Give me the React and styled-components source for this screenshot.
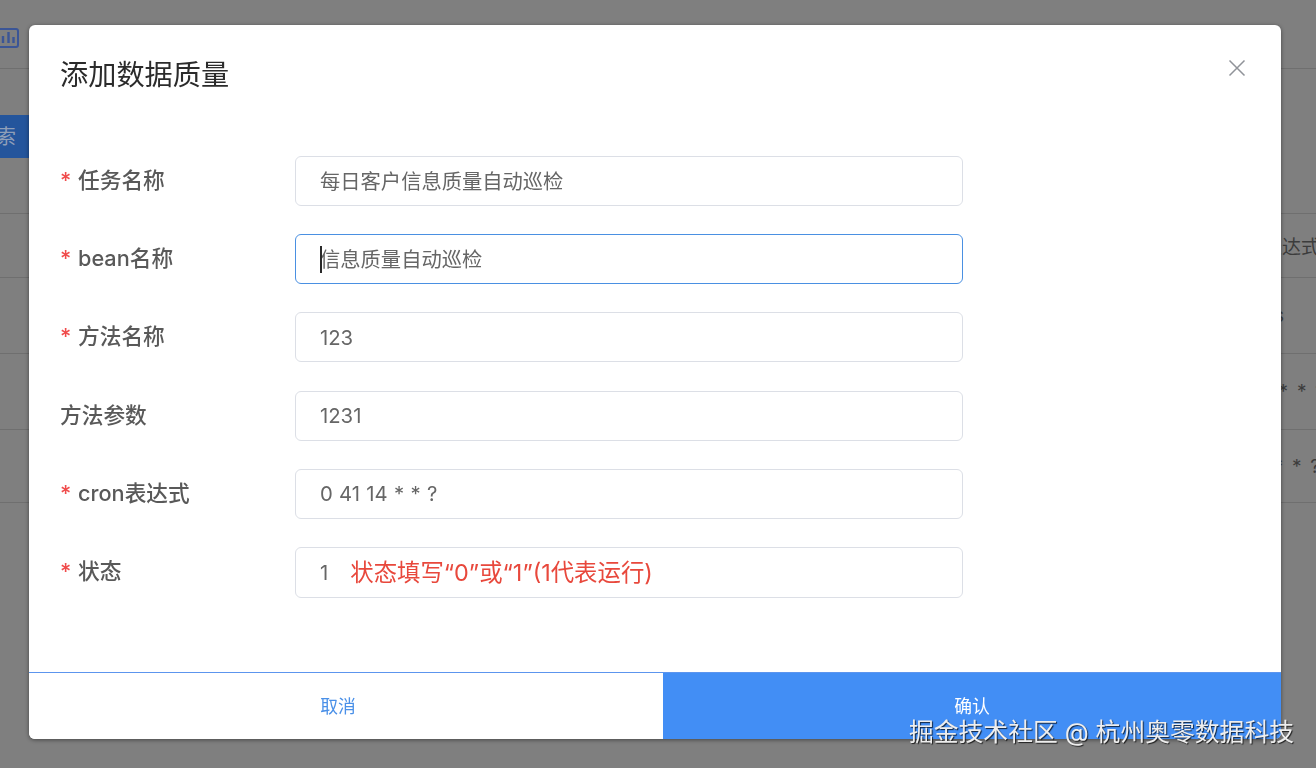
import React from "react";
import styled, { createGlobalStyle } from "styled-components";

const FONT = `Inter, "Noto Sans CJK SC", sans-serif`;

const Global = createGlobalStyle`
  html, body { margin: 0; padding: 0; height: 100%; overflow: hidden; background: #7f7f7f; }
  body { font-family: ${FONT}; }
`;

const Page = styled.div`
  width: 1316px;
  height: 768px;
  overflow: hidden;
  background: #7f7f7f;
  color: #3c3c3c;
`;
const TopBar = styled.header`
  height: 69px;
  box-sizing: border-box;
  border-bottom: 1px solid #6f6f6f;
  display: flex;
  align-items: flex-start;
  padding-top: 28px;
`;
const Toolbar = styled.div`
  height: 144px;
  box-sizing: border-box;
  padding-top: 46px;
`;
const SearchButton = styled.div`
  width: 36px;
  height: 43px;
  box-sizing: border-box;
  padding-right: 20px;
  background: #24559c;
  color: #8f9fb8;
  font-size: 20px;
  line-height: 45px;
  white-space: nowrap;
  display: flex;
  justify-content: flex-end;
`;
const TableRow = styled.div`
  height: ${(p) => p.$h}px;
  box-sizing: border-box;
  border-top: 1px solid #6f6f6f;
  display: flex;
  align-items: center;
  justify-content: flex-end;
  white-space: nowrap;
  font-size: 19px;
  word-spacing: 3.5px;
`;
const CellText = styled.span`
  flex: none;
  margin-right: ${(p) => p.$right}px;
`;

const Overlay = styled.div`
  position: fixed;
  inset: 0;
  padding: 25px 35px 29px 29px;
  box-sizing: border-box;
  display: flex;
`;
const Modal = styled.section`
  flex: 1;
  background: #fff;
  border-radius: 6px;
  overflow: hidden;
  box-shadow: 0 1px 4px rgba(0, 0, 0, 0.45);
  display: flex;
  flex-direction: column;
`;
const ModalHeader = styled.div`
  height: 131px;
  box-sizing: border-box;
  padding: 30px 35px 0 31px;
  display: flex;
  justify-content: space-between;
  align-items: flex-start;
`;
const Title = styled.h2`
  margin: 0;
  font-size: 28.2px;
  line-height: 40px;
  font-weight: 400;
  color: #2b2b2b;
`;
const CloseIcon = styled.svg`
  width: 18px;
  height: 18px;
  margin-top: 4px;
  flex: none;
`;
const Form = styled.div`
  flex: 1;
  padding-left: 31px;
  display: flex;
  flex-direction: column;
  gap: 28.2px;
`;
const FormRow = styled.div`
  display: flex;
  align-items: center;
`;
const Label = styled.label`
  width: 235px;
  flex: none;
  font-size: 21.7px;
  font-weight: 500;
  color: #595959;
  line-height: 50px;
  margin-top: -2px;
  display: flex;
`;
const Star = styled.span`
  color: #f04b4b;
  width: 18px;
  flex: none;
`;
const Field = styled.div`
  position: relative;
  width: 668px;
  height: ${(p) => (p.$tall ? 51 : 50)}px;
  box-sizing: border-box;
  border: 1px solid ${(p) => (p.$focus ? "#4a90e2" : "#dcdfe6")};
  border-radius: 6px;
  padding: 1px 24px 0;
  font-size: 20.3px;
  line-height: 48px;
  color: #666666;
  word-spacing: 0.6px;
  white-space: nowrap;
  display: flex;
  align-items: center;
`;
const Caret = styled.span`
  position: absolute;
  left: 24px;
  top: 11px;
  width: 2px;
  height: 27px;
  background: #2a2a2a;
`;
const Hint = styled.span`
  color: #e8483c;
  font-size: 23.4px;
  margin-left: 22px;
  word-spacing: 0;
`;
const Footer = styled.div`
  height: 67px;
  box-sizing: border-box;
  border-top: 1px solid #5c95ee;
  display: flex;
`;
const CancelButton = styled.div`
  width: 634px;
  flex: none;
  box-sizing: border-box;
  padding: 0 16px 2px 0;
  color: #4a90e8;
  font-size: 17.8px;
  display: flex;
  align-items: center;
  justify-content: center;
  background: #fff;
`;
const ConfirmButton = styled.div`
  flex: 1;
  background: #428ef5;
  color: #fff;
  font-size: 17.8px;
  padding-bottom: 2px;
  display: flex;
  align-items: center;
  justify-content: center;
`;
const Watermark = styled.div`
  position: fixed;
  right: 22px;
  top: 714px;
  font-size: 24.8px;
  line-height: 36px;
  color: #eeeeee;
  white-space: nowrap;
  text-shadow: 1px 1px 1px rgba(0, 0, 0, 0.75);
`;

const fields = [
  { label: "任务名称", req: true, value: "每日客户信息质量自动巡检" },
  { label: "bean名称", req: true, value: "信息质量自动巡检", focus: true },
  { label: "方法名称", req: true, value: "123" },
  { label: "方法参数", value: "1231" },
  { label: "cron表达式", req: true, value: "0 41 14 * * ?" },
  { label: "状态", req: true, value: "1", tall: true, hint: "状态填写“0”或“1”(1代表运行)" },
];

export default function App() {
  return (
    <>
      <Global />
      <Page>
        <TopBar>
          <svg width="19" height="20" viewBox="0 0 19 20" fill="none">
            <rect x="-12" y="1" width="30" height="18" rx="2" stroke="#3b5596" strokeWidth="2" />
            <path d="M3 15V8M8.5 15V4M13.5 15V9" stroke="#3b5596" strokeWidth="2.4" />
          </svg>
        </TopBar>
        <Toolbar>
          <SearchButton>搜索</SearchButton>
        </Toolbar>
        <TableRow $h={64}><CellText $right={-4}>cron表达式</CellText></TableRow>
        <TableRow $h={76}><CellText $right={32}>s</CellText></TableRow>
        <TableRow $h={76}><CellText $right={-9}>0 41 14 * * ?</CellText></TableRow>
        <TableRow $h={73}><CellText $right={-4}>0 41 14 * * ?</CellText></TableRow>
        <TableRow $h={40} />
      </Page>
      <Overlay>
        <Modal>
          <ModalHeader>
            <Title>添加数据质量</Title>
            <CloseIcon viewBox="0 0 18 18" fill="none" stroke="#909399" strokeWidth="1.5">
              <path d="M1.5 1.5L16.5 16.5M16.5 1.5L1.5 16.5" />
            </CloseIcon>
          </ModalHeader>
          <Form>
            {fields.map((f) => (
              <FormRow key={f.label}>
                <Label>
                  {f.req && <Star>*</Star>}
                  {f.label}
                </Label>
                <Field $focus={f.focus} $tall={f.tall}>
                  {f.focus && <Caret />}
                  {f.value}
                  {f.hint && <Hint>{f.hint}</Hint>}
                </Field>
              </FormRow>
            ))}
          </Form>
          <Footer>
            <CancelButton>取消</CancelButton>
            <ConfirmButton>确认</ConfirmButton>
          </Footer>
        </Modal>
      </Overlay>
      <Watermark>掘金技术社区 @ 杭州奥零数据科技</Watermark>
    </>
  );
}
